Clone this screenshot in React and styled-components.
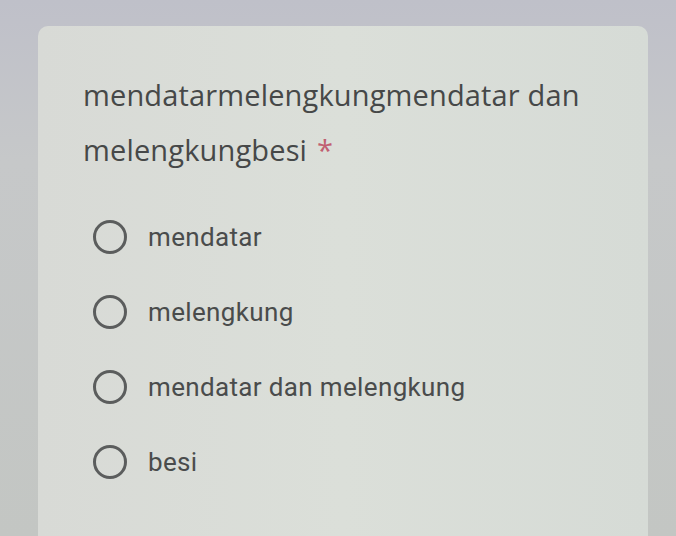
import React from "react";
import styled, { createGlobalStyle } from "styled-components";

const Global = createGlobalStyle`
  html, body {
    margin: 0;
    padding: 0;
    width: 676px;
    height: 536px;
    overflow: hidden;
    background: #c4c6cb;
  }
`;

const Screen = styled.div`
  width: 676px;
  height: 536px;
  box-sizing: border-box;
  padding: 26px 28px 0 38px;
  background: linear-gradient(180deg, #bfc0c9 0%, #c6c8c9 30%, #c3c6c3 100%);
  font-family: Roboto, "Noto Sans", sans-serif;
`;

const Card = styled.div`
  height: 100%;
  box-sizing: border-box;
  border-radius: 10px 10px 0 0;
  background: linear-gradient(90deg, #d8dad6 0%, #dbdfd9 50%, #d6dbd6 100%);
  padding: 41px 20px 0 45px;
`;

const Title = styled.div`
  font-family: "Open Sans", Roboto, sans-serif;
  font-size: 29px;
  line-height: 55px;
  color: #464848;
  letter-spacing: 0.15px;
`;

const TitleLine = styled.div`
  display: flex;
  align-items: baseline;
  gap: 10px;
`;

const Star = styled.span`
  color: #c15f72;
`;

const Options = styled.div`
  display: flex;
  flex-direction: column;
  gap: 41px;
  margin-top: 43px;
  padding-left: 10px;
`;

const Option = styled.div`
  display: flex;
  align-items: center;
  gap: 21px;
  height: 34px;
`;

const Radio = styled.span`
  width: 28px;
  height: 28px;
  border: 3px solid #5b5d5d;
  border-radius: 50%;
  flex: none;
`;

const Label = styled.span`
  font-size: 26px;
  color: #4a4c4c;
  letter-spacing: 0.35px;
`;

const choices = ["mendatar", "melengkung", "mendatar dan melengkung", "besi"];

export default function App() {
  return (
    <>
      <Global />
      <Screen>
        <Card>
          <Title>
            <TitleLine>mendatarmelengkungmendatar dan</TitleLine>
            <TitleLine>
              <span>melengkungbesi</span>
              <Star>*</Star>
            </TitleLine>
          </Title>
          <Options>
            {choices.map((c) => (
              <Option key={c}>
                <Radio />
                <Label>{c}</Label>
              </Option>
            ))}
          </Options>
        </Card>
      </Screen>
    </>
  );
}
